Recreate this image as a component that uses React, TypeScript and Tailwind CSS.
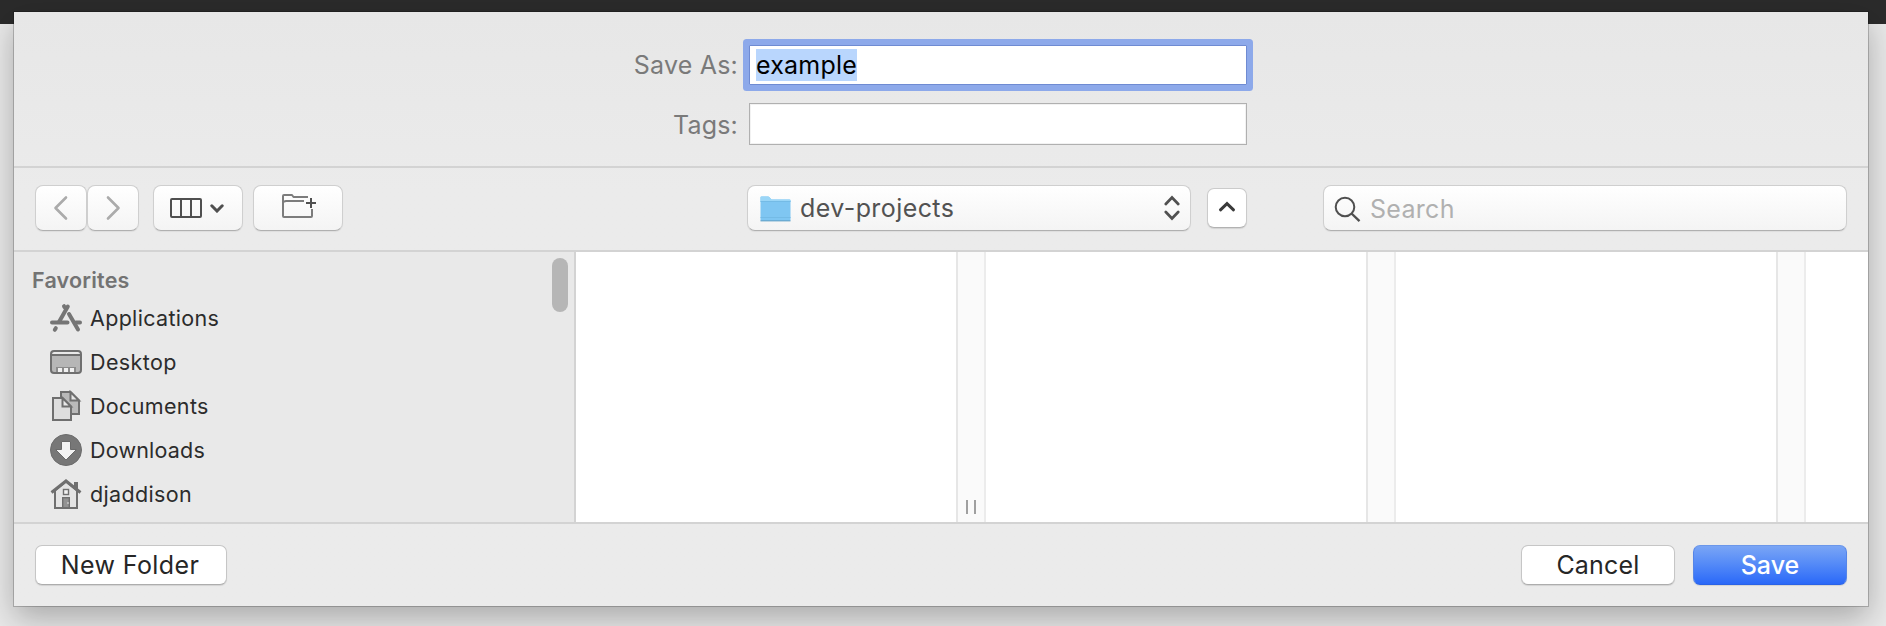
import React from "react";

const raised =
  "border border-[#cfcfcf] border-b-[#b0b0b0] bg-linear-to-b from-white to-[#f4f4f4] shadow-[0_1px_1px_rgba(0,0,0,0.06)]";
const push =
  "flex h-10 items-center justify-center rounded-[7px] border border-[#c6c6c6] border-b-[#adadad] bg-white text-[25px] leading-none text-[#262626] shadow-[0_1px_1px_rgba(0,0,0,0.1)]";

function AppsIcon() {
  return (
    <svg width="32" height="32" viewBox="0 0 32 32" fill="none" stroke="#757575" strokeWidth="4" strokeLinecap="round">
      <path d="M2 20.5H17.5M26 20.5H30" />
      <path d="M17.8 4.5L9 20" />
      <path d="M14 4.2L14.8 5.6" />
      <path d="M19 12L28 27.5" />
      <path d="M5.8 26.2L4.8 27.8" />
    </svg>
  );
}

function DesktopIcon() {
  return (
    <svg width="32" height="32" viewBox="0 0 32 32" fill="none">
      <rect x="1" y="5" width="30" height="22" rx="3" fill="#b6b6b6" />
      <path d="M2 9V8a2 2 0 0 1 2-2H28a2 2 0 0 1 2 2V9Z" fill="#e9e9e9" />
      <path d="M2 9H30" stroke="#6f6f6f" strokeWidth="2" />
      <path d="M6 27V21H26V27Z" fill="#8b8b8b" />
      <path d="M8 22h4v4h-4zM14 22h4v4h-4zM20 22h4v4h-4z" fill="#f0f0f0" />
      <rect x="1" y="5" width="30" height="22" rx="3" stroke="#6f6f6f" strokeWidth="2" />
    </svg>
  );
}

function DocumentsIcon() {
  return (
    <svg width="32" height="32" viewBox="0 0 32 32" stroke="#6f6f6f" strokeWidth="2">
      <path d="M11 2H20.5L29 10.5V24H11Z" fill="#b9b9b9" />
      <path d="M20.5 2V10.5H29Z" fill="#e6e6e6" />
      <path d="M3 8H12.5L21 16.5V30H3Z" fill="#dedede" />
      <path d="M12.5 8V16.5H21Z" fill="#e9e9e9" />
    </svg>
  );
}

function DownloadsIcon() {
  return (
    <svg width="32" height="32" viewBox="0 0 32 32">
      <circle cx="16" cy="16" r="15.5" fill="#777777" stroke="#6c6c6c" />
      <path d="M11.5 7.5H20.5V15.5H26.5L16 26L5.5 15.5H11.5Z" fill="#f3f3f3" stroke="#6a6a6a" />
    </svg>
  );
}

function HomeIcon() {
  return (
    <svg width="32" height="32" viewBox="0 0 32 32" fill="none" stroke="#6f6f6f" strokeWidth="2">
      <path d="M25 12V5H27V14" fill="#a0a0a0" />
      <path d="M5 12.5L16 3.5L27 12.5V30H5Z" fill="#e4e4e4" />
      <path d="M1.5 14.5L16 3L30.5 14.5" strokeWidth="3" />
      <rect x="13.5" y="11.5" width="5" height="5" strokeWidth="1.4" fill="#f2f2f2" />
      <rect x="12.7" y="19.7" width="6.6" height="10" strokeWidth="1.4" fill="#929292" />
      <path d="M18 24v2" stroke="#e0e0e0" strokeWidth="1" />
    </svg>
  );
}

const favorites = [
  { label: "Applications", icon: <AppsIcon />, track: "tracking-[0.32px]" },
  { label: "Desktop", icon: <DesktopIcon />, track: "tracking-[0.4px]" },
  { label: "Documents", icon: <DocumentsIcon />, track: "tracking-[0.35px]" },
  { label: "Downloads", icon: <DownloadsIcon />, track: "tracking-[0.2px]" },
  { label: "djaddison", icon: <HomeIcon />, track: "tracking-[0.35px]" },
];

function Gutter({ handle = false }: { handle?: boolean }) {
  return (
    <div className="flex w-[30px] shrink-0 items-end justify-center gap-1.5 border-x-2 border-l-[#e6e6e6] border-r-[#ececec] bg-[#fafafa] pb-2">
      {handle && (
        <>
          <span className="h-3.5 w-0.5 bg-[#a0a0a0]" />
          <span className="h-3.5 w-0.5 bg-[#a0a0a0]" />
        </>
      )}
    </div>
  );
}

export default function App() {
  return (
    <div className="h-[626px] w-[1886px] overflow-hidden bg-[linear-gradient(#2b2b2b_24px,#e9e9e9_24px)] pt-3 pl-3.5 font-['Inter','Liberation_Sans',sans-serif]">
      <div className="flex h-[594px] w-[1854px] flex-col bg-linear-to-b from-[#e7e7e7] to-[#ebebeb] to-30% shadow-[0_0_0_1px_rgba(0,0,0,0.2),0_12px_30px_rgba(0,0,0,0.28)]">
        <section className="flex h-[156px] shrink-0 flex-col gap-3 border-b-2 border-[#d3d3d3] pt-[33px] text-[25px] leading-none text-[#7a7a7a]">
          <div className="flex h-10 items-center">
            <label className="w-[725px] pr-px text-right tracking-[0.2px]">Save As:</label>
            <div className="ml-2.5 flex h-10 w-[498px] items-center rounded-[1px] border border-[#6f8bd2] bg-white pl-1.5 shadow-[0_0_0_6px_#8da9ea]">
              <span className="flex h-8 items-center bg-[#b9d6fd] tracking-[0.2px] text-black">example</span>
            </div>
          </div>
          <div className="flex h-[54px] items-center">
            <label className="w-[725px] pt-0.5 pr-px text-right tracking-[0.2px]">Tags:</label>
            <div className="ml-2.5 h-[42px] w-[498px] border border-[#b0b0b0] bg-white shadow-[inset_0_0_0_1px_#f2f2f2]" />
          </div>
        </section>

        <section className="flex h-[84px] shrink-0 items-center border-b-2 border-[#d3d3d3] pb-0.5 pl-[21px] text-[25px] leading-none">
          <button className={`flex h-[46px] w-[52px] items-center justify-center rounded-[8px] ${raised}`}>
            <svg width="16" height="26" viewBox="0 0 16 26" fill="none" stroke="#ababab" strokeWidth="2.6" strokeLinecap="round" strokeLinejoin="round">
              <path d="M13 2.5L2.5 13L13 23.5" />
            </svg>
          </button>
          <button className={`flex h-[46px] w-[52px] items-center justify-center rounded-[8px] ${raised}`}>
            <svg width="16" height="26" viewBox="0 0 16 26" fill="none" stroke="#ababab" strokeWidth="2.6" strokeLinecap="round" strokeLinejoin="round">
              <path d="M3 2.5L13.5 13L3 23.5" />
            </svg>
          </button>
          <button className={`ml-3.5 flex h-[46px] w-[90px] items-center gap-2 rounded-[8px] pl-4 ${raised}`}>
            <svg width="32" height="20" viewBox="0 0 32 20" fill="none" stroke="#4f4f4f" strokeWidth="2">
              <rect x="1" y="1" width="30" height="18" rx="1" />
              <path d="M11 1V19M21 1V19" />
            </svg>
            <svg width="14" height="9" viewBox="0 0 14 9" fill="none" stroke="#4f4f4f" strokeWidth="3" strokeLinecap="round" strokeLinejoin="miter">
              <path d="M1.8 1.8L7 7L12.2 1.8" />
            </svg>
          </button>
          <button className={`ml-2.5 flex h-[46px] w-[90px] items-start rounded-[8px] pt-[7px] pl-7 ${raised}`}>
            <svg width="34" height="26" viewBox="0 0 34 26" fill="none" stroke="#7c7c7c" strokeWidth="2" strokeLinejoin="round">
              <path d="M26 4H11.5L10 2H2Q1 2 1 3V23Q1 24 2 24H29Q30 24 30 23V16" />
              <path d="M2 9.5Q2 8 4 8H22" />
              <path d="M24 10H34M29 5V15" stroke="#505050" />
            </svg>
          </button>

          <button className={`ml-[404px] flex h-[46px] w-[444px] items-center rounded-[8px] pr-2.5 pl-3 text-[#525252] ${raised}`}>
            <svg width="31" height="28" viewBox="0 0 31 28">
              <path d="M.5 3.5Q.5 2.5 1.5 2.5H8Q9 2.5 9.7 3.4L11.5 5.5H29.5Q30.5 5.5 30.5 6.5V25.5Q30.5 27 29.5 27H1.5Q.5 27 .5 25.5Z" fill="#7fc6f2" />
              <path d="M.5 8V3.5Q.5 2.5 1.5 2.5H8Q9 2.5 9.7 3.4L11.5 5.5H29.5Q30.5 5.5 30.5 6.5V8Z" fill="#9ad6f7" />
              <path d="M.5 7.5H30.5M.5 23.5H30.5" stroke="#74bbe6" />
              <path d="M.5 26.8H30.5" stroke="#68a6cb" strokeWidth="1.2" />
            </svg>
            <span className="ml-[9px] pt-px tracking-[0.42px]">dev-projects</span>
            <svg className="ml-auto" width="16" height="26" viewBox="0 0 16 26" fill="none" stroke="#505050" strokeWidth="2.7" strokeLinecap="round">
              <path d="M1.8 9L8 2.5L14.2 9M1.8 17L8 23.5L14.2 17" />
            </svg>
          </button>
          <button className="ml-4 flex h-10 w-10 items-center justify-center rounded-[7px] border border-[#cbcbcb] border-b-[#b2b2b2] bg-white pb-1 shadow-[0_1px_1px_rgba(0,0,0,0.1)]">
            <svg width="18" height="11" viewBox="0 0 18 11" fill="none" stroke="#3a3a3a" strokeWidth="3" strokeLinecap="round">
              <path d="M2.5 8.8L9 2.6L15.5 8.8" />
            </svg>
          </button>
          <div className={`ml-[76px] flex h-[46px] w-[524px] items-center rounded-[8px] pl-2.5 ${raised}`}>
            <svg className="mt-0.5" width="27" height="27" viewBox="0 0 27 27" fill="none" stroke="#4f4f4f" strokeWidth="2">
              <circle cx="11" cy="11" r="9.3" />
              <path d="M17.5 17.5L25.5 25.2" strokeWidth="2.4" />
            </svg>
            <span className="ml-[9px] pt-0.5 tracking-[0.3px] text-[#b0b0b0]">Search</span>
          </div>
        </section>

        <section className="flex h-[272px] shrink-0 border-b-2 border-[#d3d3d3] bg-white">
          <aside className="flex w-[562px] shrink-0 justify-between border-r-2 border-[#d3d3d3] bg-[#e9e9e9] pr-1.5 pl-[18px]">
            <div className="flex flex-col text-[21.5px] leading-none">
              <h2 className="flex h-11 items-center pt-3.5 font-semibold tracking-[0.2px] text-[#737373]">Favorites</h2>
              <ul>
                {favorites.map((f) => (
                  <li key={f.label} className="flex h-11 items-center gap-2 pl-[18px] text-[#2c2c2c]">
                    {f.icon}
                    <span className={`pt-0.5 ${f.track}`}>{f.label}</span>
                  </li>
                ))}
              </ul>
            </div>
            <div className="mt-1.5 h-[54px] w-4 rounded-full bg-[#b6b6b6]" />
          </aside>
          <div className="w-[380px] shrink-0" />
          <Gutter handle />
          <div className="w-[380px] shrink-0" />
          <Gutter />
          <div className="w-[380px] shrink-0" />
          <Gutter />
        </section>

        <footer className="flex flex-1 items-center pl-[21px]">
          <button className={`w-48 pr-0.5 tracking-[0.4px] ${push}`}>New Folder</button>
          <button className={`ml-auto w-[154px] tracking-[0.2px] ${push}`}>Cancel</button>
          <button className="mr-[21px] ml-[18px] flex h-10 w-[154px] items-center justify-center rounded-[7px] border border-[#5585e8] border-t-[#6b97ea] border-b-[#2a62e6] bg-linear-to-b from-[#7aa5f5] to-[#2a68f8] text-[25px] leading-none font-medium text-white shadow-[0_1px_1px_rgba(0,0,0,0.1)]">
            Save
          </button>
        </footer>
      </div>
    </div>
  );
}
